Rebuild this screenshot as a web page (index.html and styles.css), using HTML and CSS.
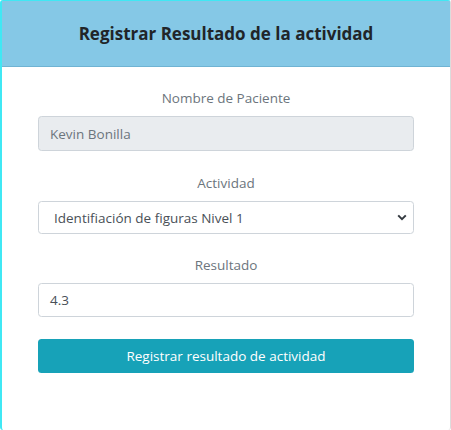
FILE: index.html
```html
<!DOCTYPE html>
<html lang="es">
<head>
<meta charset="utf-8">
<link rel="stylesheet" href="styles.css">
</head>
<body>
<div class="card">
  <div class="card-header">
    <h5 class="title">Registrar Resultado de la actividad</h5>
  </div>
  <div class="card-body">
    <div class="group">
      <label class="label">Nombre de Paciente</label>
      <div class="control disabled">Kevin Bonilla</div>
    </div>
    <div class="group group-select">
      <label class="label">Actividad</label>
      <div class="control select">
        <span>Identifiación de figuras Nivel 1</span>
        <svg class="chev" width="10" height="7" viewBox="0 0 10 7"><path d="M1.2 1.4 L5 5.2 L8.8 1.4" fill="none" stroke="#343a40" stroke-width="2"/></svg>
      </div>
    </div>
    <div class="group">
      <label class="label">Resultado</label>
      <div class="control short">4.3</div>
    </div>
    <div class="btn">Registrar resultado de actividad</div>
  </div>
</div>
</body>
</html>
```
FILE: styles.css
```css
html, body {
  margin: 0;
  padding: 0;
  background: #fff;
}
body {
  font-family: "Open Sans", "Noto Sans", sans-serif;
  font-size: 13.5px;
  color: #495057;
}
.card {
  height: 430px;
  box-sizing: border-box;
  border-left: 2px solid #40e8f4;
  border-top: 1px solid #40e8f4;
  border-right: 1px solid #dcdcdc;
  border-radius: 3px;
}
.card-header {
  height: 65px;
  background: #85c8e6;
  border-bottom: 1px solid #6fb3d3;
  display: flex;
  align-items: center;
  justify-content: center;
}
.title {
  margin: 0;
  font-size: 17px;
  font-weight: 700;
  color: #212529;
}
.card-body {
  padding: 21px 36px 0 36px;
  display: flex;
  flex-direction: column;
}
.group {
  display: flex;
  flex-direction: column;
  margin-bottom: 22px;
}
.group-select {
  margin-bottom: 21px;
}
.label {
  text-align: center;
  color: #6c757d;
  line-height: 21px;
  margin-bottom: 7px;
}
.control {
  height: 35px;
  box-sizing: border-box;
  border: 1px solid #ced4da;
  border-radius: 3.5px;
  padding: 0 11px;
  display: flex;
  align-items: center;
  background: #fff;
}
.control.short {
  height: 34px;
}
.control.disabled {
  background: #e9ecef;
  color: #6c757d;
}
.control.select {
  height: 33px;
  padding-left: 15px;
  justify-content: space-between;
  padding-right: 6px;
}
.btn {
  height: 34px;
  background: #17a2b8;
  color: #fff;
  border-radius: 3.5px;
  display: flex;
  align-items: center;
  justify-content: center;
}
```
